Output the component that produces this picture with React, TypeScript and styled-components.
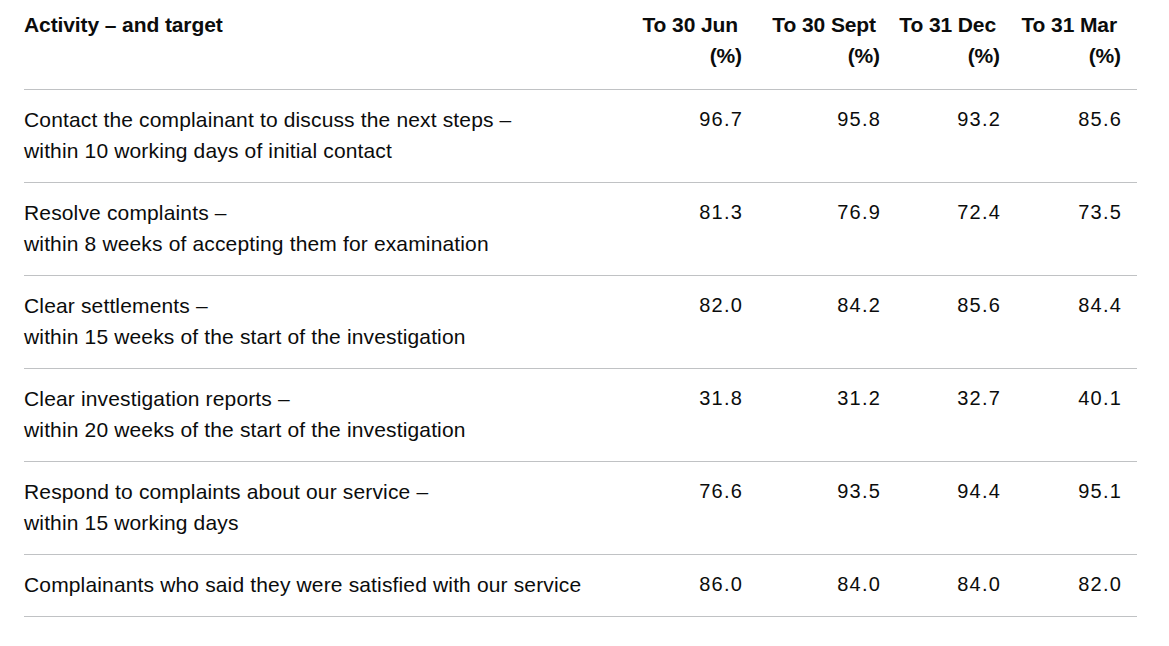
import React from "react";
import styled, { createGlobalStyle } from "styled-components";

const GlobalStyle = createGlobalStyle`
  html, body {
    margin: 0;
    padding: 0;
    background: #ffffff;
  }
  body {
    font-family: "Liberation Sans", Arial, sans-serif;
    color: #0b0c0c;
  }
`;

const Page = styled.div`
  padding: 0 32px 0 24px;
`;

const Table = styled.div`
  display: flex;
  flex-direction: column;
  width: 100%;
`;

const Row = styled.div<{ $head?: boolean }>`
  display: grid;
  grid-template-columns: 1fr 124px 138px 120px 121px;
  border-bottom: 1px solid #c0c2c4;
  padding: ${(p) => (p.$head ? "9px 0 18px" : "14px 0 16px")};
`;

const HeadCell = styled.div<{ $num?: boolean }>`
  font-family: "Liberation Sans", Arial, sans-serif;
  font-weight: 700;
  font-size: 21px;
  line-height: 31px;
  letter-spacing: -0.1px;
  text-align: ${(p) => (p.$num ? "right" : "left")};
  padding-right: ${(p) => (p.$num ? "16px" : "0")};
`;

const Period = styled.span`
  display: block;
  padding-right: 4px;
  white-space: nowrap;
`;

const Unit = styled.span`
  display: block;
`;

const Cell = styled.div`
  font-family: "Liberation Sans", Arial, sans-serif;
  font-size: 21px;
  line-height: 31px;
  letter-spacing: 0.15px;
  font-weight: 400;
`;

const Line = styled.span`
  display: block;
  white-space: nowrap;
`;

const NumCell = styled.div`
  font-family: "Liberation Sans", Arial, sans-serif;
  font-size: 20px;
  line-height: 31px;
  letter-spacing: 1.3px;
  text-align: right;
  padding-right: 14.7px;
`;

type Item = { lines: string[]; values: string[] };

const periods = ["To 30 Jun", "To 30 Sept", "To 31 Dec", "To 31 Mar"];

const items: Item[] = [
  {
    lines: [
      "Contact the complainant to discuss the next steps –",
      "within 10 working days of initial contact",
    ],
    values: ["96.7", "95.8", "93.2", "85.6"],
  },
  {
    lines: [
      "Resolve complaints –",
      "within 8 weeks of accepting them for examination",
    ],
    values: ["81.3", "76.9", "72.4", "73.5"],
  },
  {
    lines: [
      "Clear settlements –",
      "within 15 weeks of the start of the investigation",
    ],
    values: ["82.0", "84.2", "85.6", "84.4"],
  },
  {
    lines: [
      "Clear investigation reports –",
      "within 20 weeks of the start of the investigation",
    ],
    values: ["31.8", "31.2", "32.7", "40.1"],
  },
  {
    lines: ["Respond to complaints about our service –", "within 15 working days"],
    values: ["76.6", "93.5", "94.4", "95.1"],
  },
  {
    lines: ["Complainants who said they were satisfied with our service"],
    values: ["86.0", "84.0", "84.0", "82.0"],
  },
];

export default function App() {
  return (
    <Page>
      <GlobalStyle />
      <Table role="table">
        <Row $head role="row">
          <HeadCell role="columnheader">Activity – and target</HeadCell>
          {periods.map((p) => (
            <HeadCell $num key={p} role="columnheader">
              <Period>{p}</Period>
              <Unit>(%)</Unit>
            </HeadCell>
          ))}
        </Row>
        {items.map((it, i) => (
          <Row key={i} role="row">
            <Cell role="cell">
              {it.lines.map((l) => (
                <Line key={l}>{l}</Line>
              ))}
            </Cell>
            {it.values.map((v, j) => (
              <NumCell key={j} role="cell">
                {v}
              </NumCell>
            ))}
          </Row>
        ))}
      </Table>
    </Page>
  );
}
